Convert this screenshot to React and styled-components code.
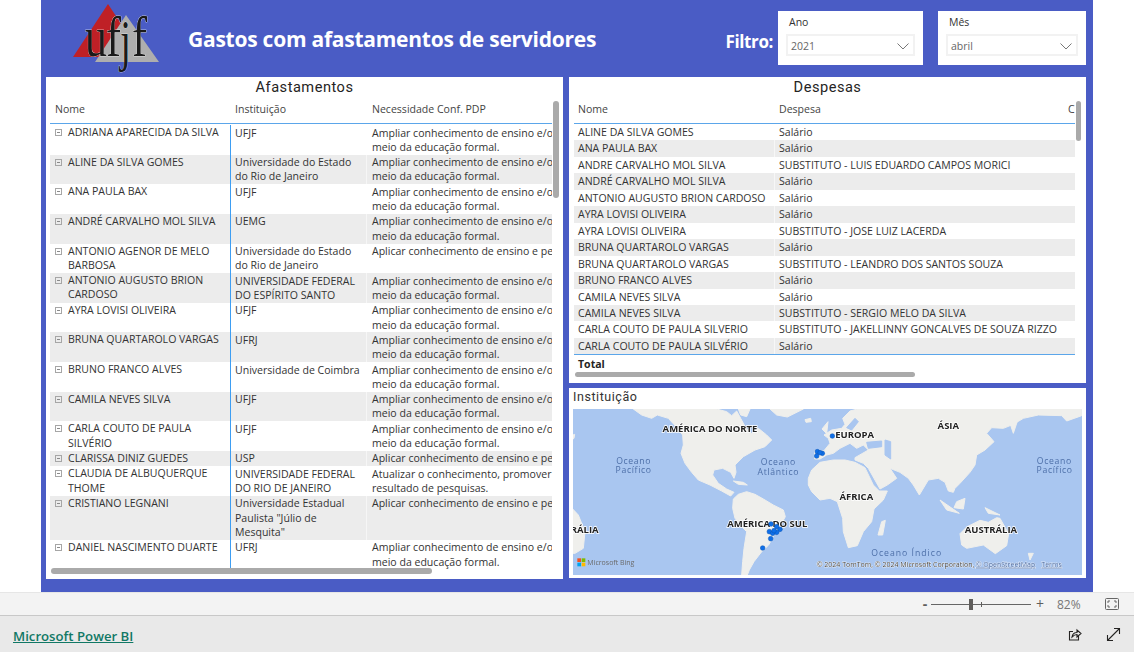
import React from 'react';
import styled, { createGlobalStyle } from 'styled-components';

const GlobalStyle = createGlobalStyle`
  html, body { margin: 0; padding: 0; background: #fff; }
  body { font-family: "Open Sans", "Noto Sans", sans-serif; color: #252423; }
`;

const Page = styled.div`
  width: 1134px;
  height: 652px;
  overflow: hidden;
  display: flex;
  flex-direction: column;
`;

const Canvas = styled.div`
  width: 1052px;
  height: 592px;
  margin-left: 41px;
  background: #4a5cc5;
  flex: none;
`;

const Header = styled.header`
  height: 77px;
  display: flex;
  align-items: flex-start;
`;

const Logo = styled.svg`
  width: 100px;
  height: 77px;
  margin-left: 24px;
  flex: none;
`;

const Title = styled.h1`
  margin: 25px 0 0 23px;
  font: 700 21px/28px "Open Sans", sans-serif;
  letter-spacing: -0.25px;
  color: #fff;
  white-space: nowrap;
`;

const FilterLabel = styled.div`
  margin: 31px 5px 0 auto;
  font: 700 17px/22px "Open Sans", sans-serif;
  letter-spacing: -0.4px;
  color: #fff;
`;

const Slicer = styled.div`
  width: ${p => p.$width}px;
  height: 54px;
  margin: 11px ${p => p.$gap}px 0 0;
  padding: 4px 8px 0;
  box-sizing: border-box;
  background: #fff;
  flex: none;
`;

const SlicerLabel = styled.div`
  padding-left: 3px;
  font-size: 10.5px;
  line-height: 15px;
  color: #333;
`;

const SlicerBox = styled.div`
  height: 22px;
  margin-top: 4px;
  padding: 2px 4px 0 3px;
  box-sizing: border-box;
  border: 2px solid #f2f2f2;
  display: flex;
  align-items: center;
  justify-content: space-between;
  font-size: 10.5px;
  color: #666;
`;

const Body = styled.div`
  display: grid;
  grid-template-columns: 517px 517px;
  column-gap: 6px;
  padding-left: 5px;
`;

const Column = styled.div`
  display: flex;
  flex-direction: column;
  gap: 5px;
`;

const Panel = styled.section`
  position: relative;
  height: ${p => p.$height}px;
  padding-left: ${p => p.$inset}px;
  box-sizing: border-box;
  background: #fff;
  overflow: hidden;
`;

const PanelTitle = styled.h2`
  margin: 0 0 0 -${p => p.$inset}px;
  height: 20px;
  font: 400 14.6px/21px Roboto, sans-serif;
  letter-spacing: 0.5px;
  text-align: center;
  color: #252423;
`;

const TableClip = styled.div`
  width: ${p => p.$width}px;
  overflow: hidden;
  font-size: 10.55px;
  color: #333;
`;

const Row = styled.div`
  display: grid;
  grid-template-columns: ${p => p.$cols};
  width: max-content;
  min-width: 100%;
  background: ${p => (p.$striped ? '#ececec' : '#fff')};
`;

const HeadRow = styled(Row)`
  height: 24px;
  padding-bottom: 2px;
  align-items: center;
  border-bottom: 1px solid #5ba6ea;
`;

const HeadCell = styled.div`
  padding-left: ${p => p.$pad}px;
  white-space: nowrap;
  color: #444;
`;

const Rows = styled.div`
  padding-top: 1px;
`;

const Cell = styled.div`
  padding: 0.52px 0 0.52px ${p => p.$pad}px;
  line-height: 14.3px;
  white-space: pre;
  border-left: ${p => (p.$divider ? '1px solid #3d9df2' : '0')};
  box-shadow: ${p => (p.$seam ? 'inset 1px 0 0 rgba(255,255,255,.55)' : 'none')};
`;

const NameCell = styled(Cell)`
  display: flex;
  gap: 6px;
  padding-left: 5px;
`;

const Toggle = styled.span`
  width: 5px;
  height: 5px;
  margin-top: 4px;
  border: 1px solid #a6a6a6;
  flex: none;
  position: relative;
  &::after {
    content: '';
    position: absolute;
    left: 1px;
    right: 1px;
    top: 2px;
    height: 1px;
    background: #8a8a8a;
  }
`;

const ThinRow = styled(Row)`
  height: 16.46px;
  line-height: 16.46px;
`;

const ThinCell = styled.div`
  padding-left: ${p => p.$pad}px;
  white-space: nowrap;
  box-shadow: ${p => (p.$seam ? 'inset 1px 0 0 rgba(255,255,255,.6)' : 'none')};
`;

const TotalRow = styled.div`
  height: 18px;
  padding-left: 4px;
  border-top: 1px solid #5ba6ea;
  font-weight: 700;
  line-height: 18px;
  color: #252423;
`;

const ScrollThumb = styled.div`
  position: absolute;
  left: ${p => p.$x}px;
  top: ${p => p.$y}px;
  width: ${p => p.$w}px;
  height: ${p => p.$h}px;
  border-radius: 3px;
  background: #aaaaaa;
`;

const MapTitle = styled.h2`
  margin: 0;
  height: 21px;
  font: 400 12.5px/18px Roboto, sans-serif;
  letter-spacing: 0.55px;
  color: #333;
`;

const MapFrame = styled.svg`
  display: block;
  width: 509px;
  height: 166px;
  filter: blur(0.25px);
`;

const ZoomBar = styled.div`
  height: 22px;
  flex: none;
  display: flex;
  align-items: center;
  background: #f3f3f3;
  border-top: 1px solid #e6e6e6;
  border-bottom: 1px solid #c8c8c8;
  padding-left: 921px;
  font-size: 12px;
  color: #605e5c;
`;

const ZoomSign = styled.span`
  width: ${p => p.$w}px;
  text-align: center;
  font-size: 14px;
  font-weight: ${p => p.$weight || 400};
  line-height: 14px;
`;

const ZoomTrack = styled.div`
  position: relative;
  width: 100px;
  height: 1px;
  background: #666;
  margin: 0 2px;
`;

const ZoomThumb = styled.span`
  position: absolute;
  left: 38px;
  top: -5px;
  width: 4px;
  height: 11px;
  background: #605e5c;
`;

const ZoomTick = styled.span`
  position: absolute;
  left: 50px;
  top: -2px;
  width: 1px;
  height: 5px;
  background: #605e5c;
`;

const ZoomPercent = styled.span`
  margin-left: 10px;
  width: 23px;
  color: #777;
`;

const FitIcon = styled.svg`
  margin-left: 25px;
  width: 14px;
  height: 12px;
`;

const Footer = styled.footer`
  flex: 1;
  display: flex;
  align-items: center;
  background: #e9e9e9;
  padding: 0 13px;
`;

const ReportLink = styled.a`
  font: 600 13.2px/18px "Open Sans", sans-serif;
  color: #117865;
  text-decoration: underline;
  margin-top: 3px;
`;

const FooterIcon = styled.svg`
  width: 15px;
  height: 15px;
  margin-left: ${p => p.$gap};
  flex: none;
  fill: none;
  stroke: #252423;
  stroke-width: 1.1;
`;

const AMPLIAR = 'Ampliar conhecimento de ensino e/ou pesquisa por\nmeio da educação formal.';
const APLICAR = 'Aplicar conhecimento de ensino e pesquisa';

const afastamentos = [
  ['ADRIANA APARECIDA DA SILVA', 'UFJF', AMPLIAR],
  ['ALINE DA SILVA GOMES', 'Universidade do Estado\ndo Rio de Janeiro', AMPLIAR],
  ['ANA PAULA BAX', 'UFJF', AMPLIAR],
  ['ANDRÉ CARVALHO MOL SILVA', 'UEMG', AMPLIAR],
  ['ANTONIO AGENOR DE MELO\nBARBOSA', 'Universidade do Estado\ndo Rio de Janeiro', APLICAR],
  ['ANTONIO AUGUSTO BRION\nCARDOSO', 'UNIVERSIDADE FEDERAL\nDO ESPÍRITO SANTO', AMPLIAR],
  ['AYRA LOVISI OLIVEIRA', 'UFJF', AMPLIAR],
  ['BRUNA QUARTAROLO VARGAS', 'UFRJ', AMPLIAR],
  ['BRUNO FRANCO ALVES', 'Universidade de Coimbra', AMPLIAR],
  ['CAMILA NEVES SILVA', 'UFJF', AMPLIAR],
  ['CARLA COUTO DE PAULA\nSILVÉRIO', 'UFJF', AMPLIAR],
  ['CLARISSA DINIZ GUEDES', 'USP', APLICAR],
  ['CLAUDIA DE ALBUQUERQUE\nTHOME', 'UNIVERSIDADE FEDERAL\nDO RIO DE JANEIRO', 'Atualizar o conhecimento, promover a\nresultado de pesquisas.'],
  ['CRISTIANO LEGNANI', 'Universidade Estadual\nPaulista "Júlio de\nMesquita"', APLICAR],
  ['DANIEL NASCIMENTO DUARTE', 'UFRJ', AMPLIAR],
];

const despesas = [
  ['ALINE DA SILVA GOMES', 'Salário'],
  ['ANA PAULA BAX', 'Salário'],
  ['ANDRE CARVALHO MOL SILVA', 'SUBSTITUTO - LUIS EDUARDO CAMPOS MORICI'],
  ['ANDRÉ CARVALHO MOL SILVA', 'Salário'],
  ['ANTONIO AUGUSTO BRION CARDOSO', 'Salário'],
  ['AYRA LOVISI OLIVEIRA', 'Salário'],
  ['AYRA LOVISI OLIVEIRA', 'SUBSTITUTO - JOSE LUIZ LACERDA'],
  ['BRUNA QUARTAROLO VARGAS', 'Salário'],
  ['BRUNA QUARTAROLO VARGAS', 'SUBSTITUTO - LEANDRO DOS SANTOS SOUZA'],
  ['BRUNO FRANCO ALVES', 'Salário'],
  ['CAMILA NEVES SILVA', 'Salário'],
  ['CAMILA NEVES SILVA', 'SUBSTITUTO - SERGIO MELO DA SILVA'],
  ['CARLA COUTO DE PAULA SILVERIO', 'SUBSTITUTO - JAKELLINNY GONCALVES DE SOUZA RIZZO'],
  ['CARLA COUTO DE PAULA SILVÉRIO', 'Salário'],
];

const LEFT_COLS = '180px 136px 330px';
const RIGHT_COLS = '200px 294px 40px';

const poly = pts => `M${pts.join(' L')} Z`;

// coordinates are 3x the screen offset from (570, 385)
const newWorld = [
  '190 72,215 90,245 100,262 90,295 100,318 125,338 150,340 180,333 205,345 235,365 262,385 285,420 300,455 318,482 333,492 322,470 312,445 295,428 270,432 255,458 250,482 262,492 280,498 262,495 240,520 215,555 195,585 185,605 165,590 150,565 130,545 145,528 130,512 100,500 78,485 92,470 80,440 72',
  '490 342,505 328,530 320,555 328,580 342,610 360,640 375,646 395,632 420,612 450,596 480,575 500,552 530,538 555,532 570,515 570,518 530,522 490,530 440,510 420,495 400,488 370',
  '600 72,700 72,652 96,620 90',
  '9 373,25 390,45 440,40 490,15 505,9 505',
  '9 150,14 148,12 160,9 162',
  '505 72,540 72,530 95,512 90',
  '490 288,520 292,532 300,505 298',
  '705 104,722 100,724 110,708 112',
].map(s => poly(s.split(',')));

const oldWorld = [
  '44 222,44 198,72 197,90 175,85 160,72 150,95 135,125 130,135 118,128 100,150 78,172 72,845 72,845 92,800 108,785 92,715 90,670 100,640 118,610 130,575 128,560 145,582 170,555 195,530 210,525 240,510 262,480 295,465 310,460 322,445 318,435 292,415 280,385 285,358 330,340 300,325 280,300 262,270 250,290 280,262 300,240 312,205 250,190 235,165 225,165 218,205 195,190 180,170 190,150 175,120 190,100 205,80 210,60 222',
  '25 300,25 280,35 255,60 232,100 225,135 225,165 232,195 248,220 300,238 318,262 318,250 345,222 372,215 410,190 440,172 482,145 488,130 440,128 400,112 350,90 340,60 345,35 320',
  '480 446,500 426,540 406,565 412,590 398,600 400,626 446,620 482,586 506,550 480,500 490,485 480',
  '66 132,84 110,80 146',
  '245 410,256 406,248 450,234 450',
  '420 345,478 385,440 375',
  '470 350,495 340,490 372,462 368',
  '555 368,600 390,565 385',
  '630 115,660 85,640 145',
  '685 505,700 505,690 525',
].map(s => poly(s.split(',')));

const waters = [
  '200 172,245 168,245 185,205 190',
  '255 165,272 170,272 222,255 210',
  '140 128,165 100,175 110,155 135',
].map(s => poly(s.split(',')));

const labels = [
  ['AMÉRICA DO NORTE', 420, 142],
  ['AMÉRICA DO SUL', 592, 425],
  ['EUROPA', 854, 158],
  ['ÁSIA', 1135, 133],
  ['ÁFRICA', 859, 346],
  ['AUSTRÁLIA', 1263, 444],
  ['RÁLIA', 44, 444],
];
const oceans = [
  ['Oceano', 191, 236], ['Pacífico', 191, 265],
  ['Oceano', 625, 240], ['Atlântico', 625, 269],
  ['Oceano', 1453, 236], ['Pacífico', 1454, 265],
];
const pins = [
  [603, 417], [598, 440], [608, 445], [620, 425], [630, 433], [620, 442], [612, 437], [602, 461], [578, 489],
  [742, 200], [757, 205], [750, 203], [740, 213], [787, 153],
];

const WorldMap = () => (
  <MapFrame viewBox="9 72 1527 498" preserveAspectRatio="none">
    <rect x="9" y="72" width="1527" height="498" fill="#a9c6f0" />
    <g fill="#efefec" stroke="#efefec" strokeWidth="3" strokeLinejoin="round">
      {newWorld.map(d => <path key={d} d={d} />)}
      <g transform="translate(690 0)">
        {oldWorld.map(d => <path key={d} d={d} />)}
        {waters.map(d => <path key={d} d={d} fill="#a9c6f0" stroke="#a9c6f0" />)}
      </g>
    </g>
    <g fontFamily="'Open Sans', sans-serif" fontSize="26" fill="#4d6fa8" textAnchor="middle" letterSpacing="2">
      {oceans.map(([t, x, y]) => <text key={t + x + y} x={x} y={y}>{t}</text>)}
      <text x="1010" y="512" letterSpacing="3">Oceano Índico</text>
    </g>
    <g fontFamily="'Open Sans', sans-serif" fontSize="28.5" fontWeight="700" fill="#222" textAnchor="middle" stroke="#fff" strokeWidth="4" paintOrder="stroke">
      {labels.map(([t, x, y]) => <text key={t} x={x} y={y}>{t}</text>)}
    </g>
    {pins.map(([x, y]) => (
      <circle key={`${x}-${y}`} cx={x} cy={y} r="7" fill="#0f6fe8" stroke="#0b55b5" strokeWidth="1.5" />
    ))}
    <rect x="22" y="520" width="11" height="11" fill="#f25022" />
    <rect x="35" y="520" width="11" height="11" fill="#7fba00" />
    <rect x="22" y="533" width="11" height="11" fill="#00a4ef" />
    <rect x="35" y="533" width="11" height="11" fill="#ffb900" />
    <text x="52" y="540" fontFamily="'Open Sans', sans-serif" fontSize="21" fill="#6b6b6b">Microsoft Bing</text>
    <g fontFamily="'Open Sans', sans-serif" fontSize="21" fill="#444" stroke="#fff" strokeWidth="2" paintOrder="stroke">
      <text x="740" y="545">© 2024 TomTom, © 2024 Microsoft Corporation,</text>
      <text x="1217" y="545" textDecoration="underline" fill="#3c5f9c">© OpenStreetMap</text>
      <text x="1414" y="545" textDecoration="underline" fill="#3c5f9c">Terms</text>
    </g>
  </MapFrame>
);

const Chevron = () => (
  <svg width="12" height="7" viewBox="0 0 12 7" fill="none" stroke="#777" strokeWidth="1">
    <path d="M.5 .5 L6 6 L11.5 .5" />
  </svg>
);

const UfjfLogo = () => (
  <Logo viewBox="0 0 100 77">
    <path d="M8 57 L43 4 L78 57 Z" fill="#bf2026" />
    <path d="M30 62 L61 15 L94 62 Z" fill="#aeaeae" />
    <g fontFamily="'Liberation Serif', serif" fontSize="56" fill="#1a1a1a" stroke="#fff" strokeWidth="0.5" paintOrder="stroke">
      <text x="20" y="56" textLength="22" lengthAdjust="spacingAndGlyphs">u</text>
      <text x="41" y="56" textLength="15" lengthAdjust="spacingAndGlyphs">f</text>
      <text x="55" y="60" textLength="11" lengthAdjust="spacingAndGlyphs">j</text>
      <text x="67" y="56" textLength="15" lengthAdjust="spacingAndGlyphs">f</text>
    </g>
  </Logo>
);

const App = () => (
  <Page>
    <GlobalStyle />
    <Canvas>
      <Header>
        <UfjfLogo />
        <Title>Gastos com afastamentos de servidores</Title>
        <FilterLabel>Filtro:</FilterLabel>
        <Slicer $width={145} $gap={15}>
          <SlicerLabel>Ano</SlicerLabel>
          <SlicerBox>2021<Chevron /></SlicerBox>
        </Slicer>
        <Slicer $width={148} $gap={7}>
          <SlicerLabel>Mês</SlicerLabel>
          <SlicerBox>abril<Chevron /></SlicerBox>
        </Slicer>
      </Header>
      <Body>
        <Panel $height={502} $inset={4}>
          <PanelTitle $inset={4}>Afastamentos</PanelTitle>
          <TableClip $width={502}>
            <HeadRow $cols={LEFT_COLS}>
              <HeadCell $pad={5}>Nome</HeadCell>
              <HeadCell $pad={5}>Instituição</HeadCell>
              <HeadCell $pad={6}>Necessidade Conf. PDP</HeadCell>
            </HeadRow>
            <Rows>
              {afastamentos.map((r, i) => (
                <Row key={r[0]} $cols={LEFT_COLS} $striped={i % 2 === 1}>
                  <NameCell><Toggle /><span>{r[0]}</span></NameCell>
                  <Cell $divider $pad={4}>{r[1]}</Cell>
                  <Cell $seam $pad={6}>{r[2]}</Cell>
                </Row>
              ))}
            </Rows>
          </TableClip>
          <ScrollThumb $x={507} $y={24} $w={6} $h={97} />
          <ScrollThumb $x={5} $y={491} $w={381} $h={6} />
        </Panel>
        <Column>
          <Panel $height={306} $inset={5}>
            <PanelTitle $inset={5}>Despesas</PanelTitle>
            <TableClip $width={501}>
              <HeadRow $cols={RIGHT_COLS}>
                <HeadCell $pad={4}>Nome</HeadCell>
                <HeadCell $pad={5}>Despesa</HeadCell>
                <HeadCell $pad={0}>Custo</HeadCell>
              </HeadRow>
              {despesas.map((r, i) => (
                <ThinRow key={r[0] + r[1]} $cols={RIGHT_COLS} $striped={i % 2 === 1}>
                  <ThinCell $pad={4}>{r[0]}</ThinCell>
                  <ThinCell $seam $pad={5}>{r[1]}</ThinCell>
                  <ThinCell />
                </ThinRow>
              ))}
              <TotalRow>Total</TotalRow>
            </TableClip>
            <ScrollThumb $x={507} $y={24} $w={5} $h={40} />
            <ScrollThumb $x={6} $y={295} $w={340} $h={5} />
          </Panel>
          <Panel $height={190} $inset={4}>
            <MapTitle>Instituição</MapTitle>
            <WorldMap />
          </Panel>
        </Column>
      </Body>
    </Canvas>
    <ZoomBar>
      <ZoomSign $w={8} $weight={700}>-</ZoomSign>
      <ZoomTrack><ZoomThumb /><ZoomTick /></ZoomTrack>
      <ZoomSign $w={14}>+</ZoomSign>
      <ZoomPercent>82%</ZoomPercent>
      <FitIcon viewBox="0 0 14 12" fill="none" stroke="#666">
        <rect x=".5" y=".5" width="13" height="11" rx="1" />
        <path d="M3 5 V3 H5 M9 3 H11 V5 M11 7 V9 H9 M5 9 H3 V7" />
      </FitIcon>
    </ZoomBar>
    <Footer>
      <ReportLink href="#">Microsoft Power BI</ReportLink>
      <FooterIcon $gap="auto" viewBox="0 0 15 15">
        <path d="M11.5 9 V13 H2.5 V4.5 H6" />
        <path d="M5 10 C5.5 7 7.5 5.5 10 5.5 V3 L14 6.5 L10 10 V7.5 C8 7.5 6.5 8.5 5 10 Z" />
      </FooterIcon>
      <FooterIcon $gap="24px" viewBox="0 0 15 15">
        <path d="M1.5 13.5 L13.5 1.5 M8 1.5 H13.5 V7 M1.5 8 V13.5 H7" />
      </FooterIcon>
    </Footer>
  </Page>
);

export default App;
